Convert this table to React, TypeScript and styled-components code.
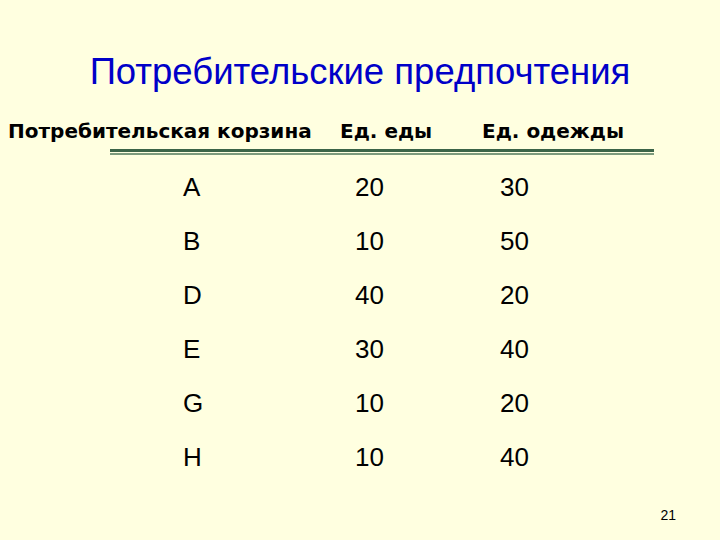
import React from 'react';
import styled, { createGlobalStyle } from 'styled-components';

const GlobalStyle = createGlobalStyle`
  html, body {
    margin: 0;
    padding: 0;
    background: #ffffe0;
  }
  body {
    font-family: "Liberation Sans", Arial, sans-serif;
  }
`;

const Slide = styled.div`
  width: 720px;
  height: 540px;
  background: #ffffe0;
  display: flex;
  flex-direction: column;
  position: relative;
  box-sizing: border-box;
`;

const Title = styled.h1`
  margin: 51px 0 0;
  font-weight: normal;
  font-size: 36.5px;
  line-height: 42px;
  color: #0000c8;
  text-align: center;
`;

const HeaderRow = styled.div`
  display: flex;
  align-items: baseline;
  margin-top: 24px;
  padding-left: 8px;
  font-family: "DejaVu Sans", "Liberation Sans", sans-serif;
  font-weight: bold;
  font-size: 20px;
  line-height: 28px;
  color: #000;
`;

const HeaderCell = styled.span<{ $width: number }>`
  width: ${({ $width }) => $width}px;
  white-space: nowrap;
`;

const Rule = styled.div`
  margin: 4px 0 0 110px;
  width: 544px;
  height: 3px;
  background: #3b6448;
  border-bottom: 1px solid #ffffe0;
  box-shadow: 0 2px 0 #7c9a7c;
`;

const Rows = styled.div`
  display: grid;
  grid-template-columns: 172px 145px auto;
  grid-auto-rows: 54px;
  padding-left: 183px;
  margin-top: 7px;
  font-size: 26px;
  color: #000;
`;

const Cell = styled.div`
  display: flex;
  align-items: center;
`;

const PageNumber = styled.div`
  position: absolute;
  right: 44px;
  bottom: 17px;
  font-size: 14px;
  color: #000;
`;

const data = [
  ['A', '20', '30'],
  ['B', '10', '50'],
  ['D', '40', '20'],
  ['E', '30', '40'],
  ['G', '10', '20'],
  ['H', '10', '40'],
];

export default function App() {
  return (
    <Slide>
      <GlobalStyle />
      <Title>Потребительские предпочтения</Title>
      <HeaderRow>
        <HeaderCell $width={332}>Потребительская корзина</HeaderCell>
        <HeaderCell $width={142}>Ед. еды</HeaderCell>
        <HeaderCell $width={150}>Ед. одежды</HeaderCell>
      </HeaderRow>
      <Rule />
      <Rows>
        {data.map((row) =>
          row.map((v, i) => <Cell key={row[0] + i}>{v}</Cell>)
        )}
      </Rows>
      <PageNumber>21</PageNumber>
    </Slide>
  );
}
